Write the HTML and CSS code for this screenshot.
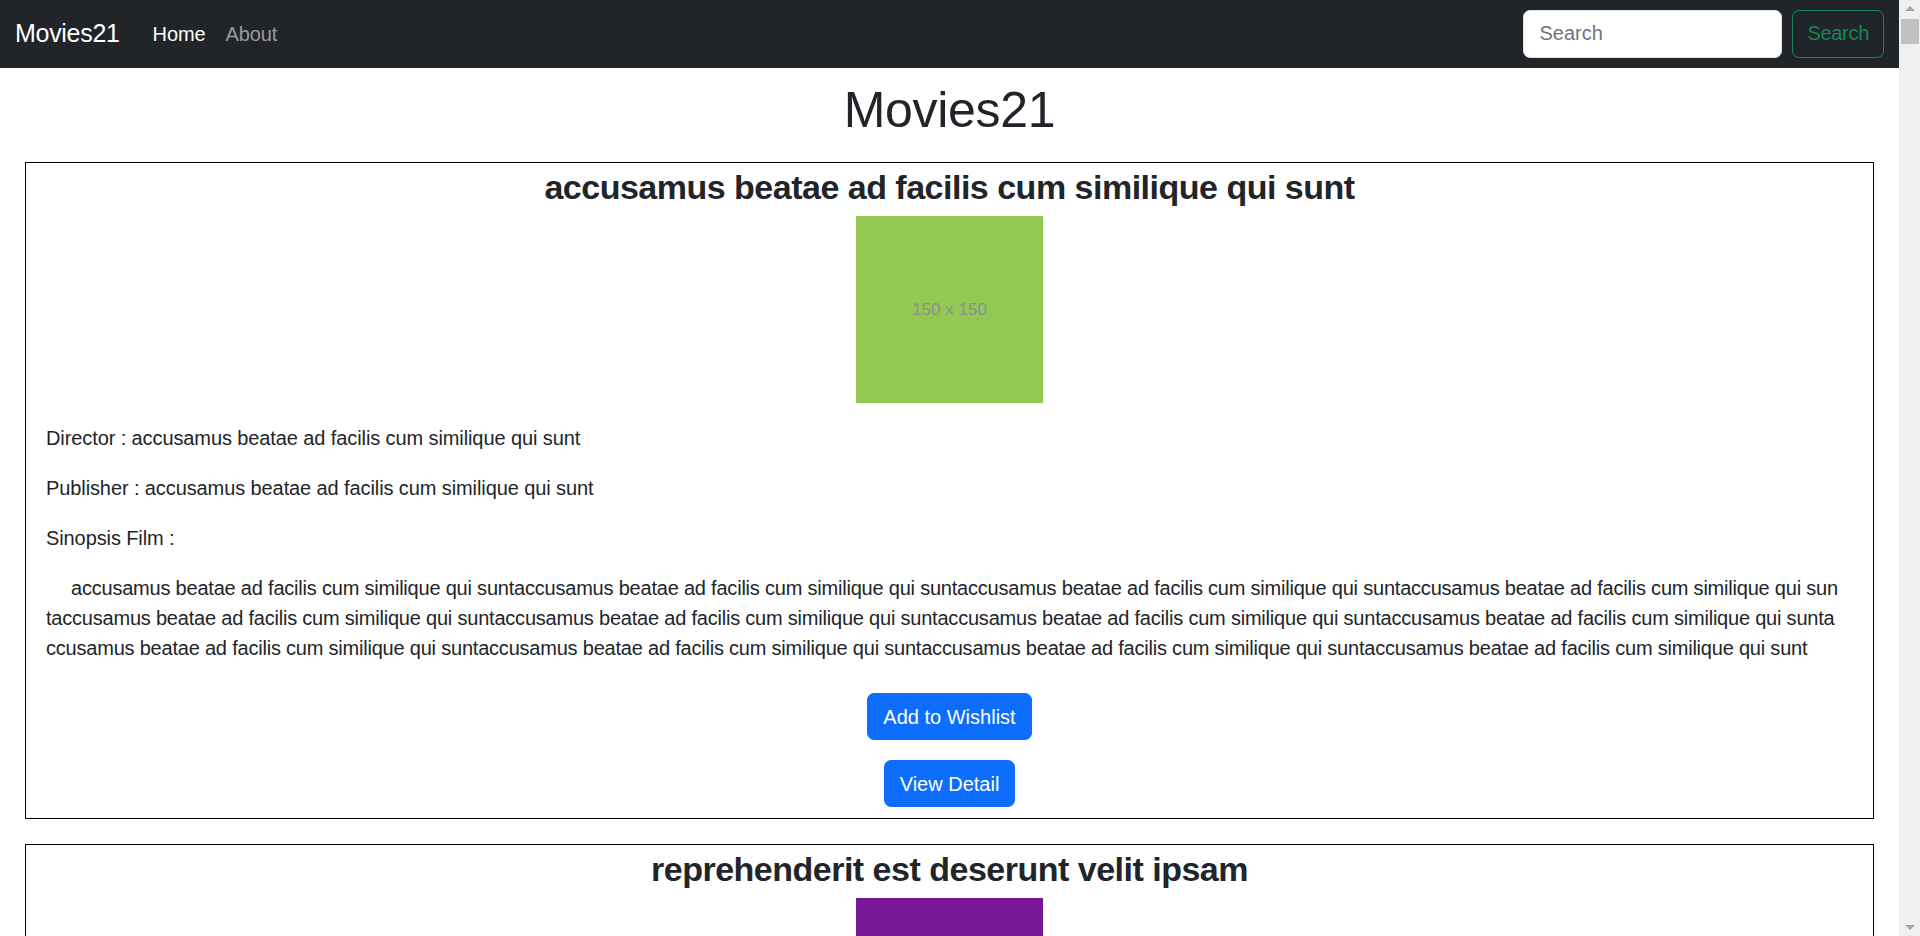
FILE: index.html
```html
<!DOCTYPE html>
<html lang="en">
<head>
<meta charset="utf-8">
<title>Movies21</title>
<link rel="stylesheet" href="styles.css">
</head>
<body>
<div class="page">
  <nav class="navbar">
    <div class="nav-left">
      <a class="brand" href="#">Movies21</a>
      <ul class="nav-links">
        <li><a class="nav-link active" href="#">Home</a></li>
        <li><a class="nav-link" href="#">About</a></li>
      </ul>
    </div>
    <form class="search">
      <input class="search-input" type="search" placeholder="Search">
      <button class="search-btn" type="button">Search</button>
    </form>
  </nav>

  <main class="main">
    <h1 class="page-title">Movies21</h1>
    <div class="movies">
      <article class="card">
        <h3 class="card-title">accusamus beatae ad facilis cum similique qui sunt</h3>
        <div class="thumb thumb-green">150 x 150</div>
        <p>Director : accusamus beatae ad facilis cum similique qui sunt</p>
        <p>Publisher : accusamus beatae ad facilis cum similique qui sunt</p>
        <p>Sinopsis Film :</p>
        <p class="synopsis">accusamus beatae ad facilis cum similique qui suntaccusamus beatae ad facilis cum similique qui suntaccusamus beatae ad facilis cum similique qui suntaccusamus beatae ad facilis cum similique qui suntaccusamus beatae ad facilis cum similique qui suntaccusamus beatae ad facilis cum similique qui suntaccusamus beatae ad facilis cum similique qui suntaccusamus beatae ad facilis cum similique qui suntaccusamus beatae ad facilis cum similique qui suntaccusamus beatae ad facilis cum similique qui suntaccusamus beatae ad facilis cum similique qui suntaccusamus beatae ad facilis cum similique qui sunt</p>
        <div class="actions">
          <button class="btn" type="button">Add to Wishlist</button>
          <button class="btn" type="button">View Detail</button>
        </div>
      </article>

      <article class="card">
        <h3 class="card-title">reprehenderit est deserunt velit ipsam</h3>
        <div class="thumb thumb-purple">150 x 150</div>
        <p>Director : reprehenderit est deserunt velit ipsam</p>
        <p>Publisher : reprehenderit est deserunt velit ipsam</p>
        <p>Sinopsis Film :</p>
        <p class="synopsis">reprehenderit est deserunt velit ipsamreprehenderit est deserunt velit ipsamreprehenderit est deserunt velit ipsamreprehenderit est deserunt velit ipsamreprehenderit est deserunt velit ipsamreprehenderit est deserunt velit ipsamreprehenderit est deserunt velit ipsamreprehenderit est deserunt velit ipsamreprehenderit est deserunt velit ipsamreprehenderit est deserunt velit ipsamreprehenderit est deserunt velit ipsamreprehenderit est deserunt velit ipsam</p>
        <div class="actions">
          <button class="btn" type="button">Add to Wishlist</button>
          <button class="btn" type="button">View Detail</button>
        </div>
      </article>
    </div>
  </main>
</div>

<aside class="scrollbar" aria-hidden="true">
  <span class="sb-arrow sb-up"></span>
  <span class="sb-track"><span class="sb-thumb"></span></span>
  <span class="sb-arrow sb-down"></span>
</aside>
</body>
</html>
```

FILE: styles.css
```css
body {
  display: flex;
  align-items: flex-start;
  margin: 0;
  font-family: "Liberation Sans", Arial, sans-serif;
  font-size: 20px;
  line-height: 30px;
  letter-spacing: -0.1px;
  color: #212529;
  background: #fff;
}

.page {
  flex: 1;
  min-width: 0;
}

/* Window scrollbar */
.scrollbar {
  position: sticky;
  top: 0;
  flex: 0 0 21px;
  display: flex;
  flex-direction: column;
  height: 100vh;
  background: #f0f0f0;
}

.sb-arrow {
  display: flex;
  align-items: center;
  justify-content: center;
  height: 19px;
}

.sb-up::before,
.sb-down::before {
  content: "";
  border-left: 5px solid transparent;
  border-right: 5px solid transparent;
}

.sb-up::before {
  margin-top: -2px;
  border-bottom: 5px solid #a3a3a3;
}

.sb-down::before {
  margin-top: 2px;
  border-top: 5px solid #a3a3a3;
}

.sb-track {
  flex: 1;
  padding: 0 1px 0 2px;
}

.sb-thumb {
  display: block;
  height: 25px;
  background: #c1c1c1;
}

/* Navbar */
.navbar {
  display: flex;
  align-items: center;
  justify-content: space-between;
  padding: 10px 15px;
  background: #212529;
}

.nav-left {
  display: flex;
  align-items: center;
}

.brand {
  margin-right: 23px;
  font-size: 25px;
  line-height: 37px;
  letter-spacing: -0.3px;
  color: #fff;
  text-decoration: none;
}

.nav-links {
  display: flex;
  margin: 0;
  padding: 0;
  list-style: none;
}

.nav-link {
  display: block;
  padding: 8px 10px;
  color: rgba(255, 255, 255, 0.55);
  text-decoration: none;
}

.nav-link.active {
  color: #fff;
}

.search {
  display: flex;
  align-items: center;
  gap: 10px;
  margin: 0;
}

.search-input {
  box-sizing: border-box;
  width: 259px;
  height: 47.5px;
  padding: 7.5px 15px;
  font-family: inherit;
  font-size: 20px;
  color: #212529;
  background: #fff;
  border: 1px solid #dee2e6;
  border-radius: 7px;
  outline: none;
}

.search-input::placeholder {
  color: #6c757d;
}

.search-btn {
  box-sizing: border-box;
  height: 47.5px;
  padding: 7.5px 14px;
  font-family: inherit;
  font-size: 20px;
  letter-spacing: -0.3px;
  color: #198754;
  background: transparent;
  border: 1px solid #198754;
  border-radius: 7px;
}

/* Main */
.main {
  padding: 0 25px;
}

.page-title {
  margin: 12px 0 22.5px;
  font-size: 50px;
  font-weight: 400;
  line-height: 60px;
  letter-spacing: -0.3px;
  text-align: center;
}

.movies {
  display: flex;
  flex-direction: column;
  gap: 25px;
}

.card {
  padding: 0 20px 11px;
  border: 1px solid #000;
}

.card-title {
  margin: 0 0 8px;
  padding-top: 3px;
  font-size: 34px;
  font-weight: 700;
  line-height: 42px;
  letter-spacing: -0.5px;
  text-align: center;
}

.thumb {
  display: flex;
  align-items: center;
  justify-content: center;
  width: 187px;
  height: 187px;
  margin: 0 auto 20px;
  font-size: 17px;
  letter-spacing: 0;
  color: #8f8f8f;
}

.thumb-green { background: #92c952; }
.thumb-purple { background: #771796; }

.card p {
  margin: 0 0 20px;
}

.card .synopsis {
  margin: 0 12px 30px 0;
  text-indent: 25px;
  letter-spacing: -0.21px;
  word-break: break-all;
}

.actions {
  display: flex;
  flex-direction: column;
  align-items: center;
  gap: 20px;
}

.btn {
  padding: 7.5px 15px;
  font-family: inherit;
  font-size: 20px;
  line-height: 30px;
  color: #fff;
  background: #0d6efd;
  border: 1px solid #0d6efd;
  border-radius: 7px;
}
```
